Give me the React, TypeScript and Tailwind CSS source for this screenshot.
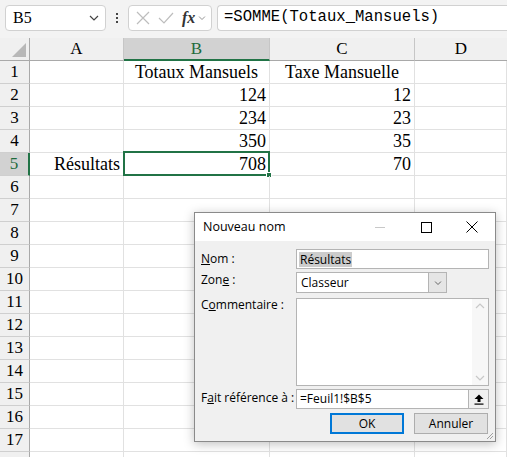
import React from "react";

const serif = { fontFamily: '"Liberation Serif", "Times New Roman", serif' };
const ui = { fontFamily: '"Open Sans", "Noto Sans", sans-serif' };
const mono = { fontFamily: '"Liberation Mono", "DejaVu Sans Mono", monospace' };

type Row = { a?: string; b?: string; c?: string; center?: boolean };

const data: Row[] = [
  { b: "Totaux Mansuels", c: "Taxe Mansuelle", center: true },
  { b: "124", c: "12" },
  { b: "234", c: "23" },
  { b: "350", c: "35" },
  { a: "Résultats", b: "708", c: "70" },
];

function Chevron({ className = "" }: { className?: string }) {
  return (
    <svg width="10" height="6" viewBox="0 0 10 6" className={className}>
      <path d="M1 1 L5 5 L9 1" fill="none" stroke="currentColor" strokeWidth="1.2" />
    </svg>
  );
}

function Toolbar() {
  return (
    <div className="h-[38px] bg-[#f3f3f3] flex items-start pt-[5px] pl-[5px]">
      <div className="w-[101px] h-[26px] bg-white border border-[#d1d1d1] rounded-[4px] flex items-center pl-[7px] pr-[6px]">
        <span className="text-[16px] text-black flex-1 leading-none" style={serif}>B5</span>
        <Chevron className="text-[#444]" />
      </div>
      <div className="w-[22px] h-[26px] flex flex-col items-center justify-center gap-[2px]">
        <span className="w-[2px] h-[2px] bg-[#444]" />
        <span className="w-[2px] h-[2px] bg-[#444]" />
        <span className="w-[2px] h-[2px] bg-[#444]" />
      </div>
      <div className="w-[84px] h-[26px] bg-white border border-[#d1d1d1] rounded-[4px] flex items-center pl-[7px]">
        <svg width="14" height="14" viewBox="0 0 14 14" className="mr-[8px]">
          <path d="M1 1 L13 13 M13 1 L1 13" stroke="#bdbdbd" strokeWidth="1.2" />
        </svg>
        <svg width="16" height="14" viewBox="0 0 16 14" className="mr-[8px]">
          <path d="M1 7 L6 12 L15 2" fill="none" stroke="#bdbdbd" strokeWidth="1.2" />
        </svg>
        <span className="text-[16px] italic font-bold text-[#333] leading-none mr-[2px]" style={serif}>fx</span>
        <Chevron className="text-[#888] scale-75" />
      </div>
      <div className="flex-1 h-[26px] ml-[5px] bg-white border border-[#d1d1d1] border-r-0 rounded-l-[4px] flex items-center pl-[6px]">
        <span className="text-[15.6px] text-black leading-none" style={mono}>=SOMME(Totaux_Mansuels)</span>
      </div>
    </div>
  );
}

function HeaderRow() {
  const cols: { l: string; w: string; sel?: boolean }[] = [
    { l: "A", w: "w-[94px]" },
    { l: "B", w: "w-[146px]", sel: true },
    { l: "C", w: "w-[145px]" },
  ];
  return (
    <div className="flex h-[23px] bg-[#f0f0f0]" style={serif}>
      <div className="w-[30px] h-full border-r border-b border-[#a9a9a9] relative">
        <div className="absolute right-[3px] bottom-[3px] w-0 h-0 border-l-[14px] border-l-transparent border-b-[14px] border-b-[#b8b8b8]" />
      </div>
      {cols.map((c) => (
        <div
          key={c.l}
          className={`${c.w} h-full flex items-center justify-center text-[17px] border-r ${
            c.sel
              ? "bg-[#d2d2d2] text-[#1e6b3c] border-r-[#c6c6c6] border-b-2 border-b-[#217346]"
              : "text-black border-r-[#c6c6c6] border-b border-b-[#a9a9a9]"
          }`}
        >
          {c.l}
        </div>
      ))}
      <div className="flex-1 h-full flex items-center justify-center text-[17px] border-b border-[#a9a9a9] pr-[0px]">
        <span className="w-[92px] text-center">D</span>
      </div>
    </div>
  );
}

function GridRow({ n, r, label = true }: { n: number; r?: Row; label?: boolean }) {
  const sel = n === 5;
  const cell = "h-full border-r border-b border-[#e1e1e1] flex items-center text-[18px] text-black";
  const align = r?.center ? "justify-center" : "justify-end pr-[3px]";
  return (
    <div className="flex h-[23px]" style={serif}>
      <div
        className={`w-[30px] h-full flex items-center justify-center text-[17px] border-b border-[#cfcfcf] ${
          sel ? "bg-[#d2d2d2] text-[#1e6b3c] border-r-2 border-r-[#217346]" : "bg-[#f0f0f0] text-black border-r border-r-[#a9a9a9]"
        }`}
      >
        {label ? n : null}
      </div>
      <div className={`w-[94px] ${cell} justify-end pr-[3px]`}>{r?.a}</div>
      <div className={`w-[146px] ${cell} ${align} relative`}>
        {r?.b}
        {sel && (
          <>
            <div className="absolute -left-[1px] -top-[2px] -right-[1px] -bottom-[1px] border-2 border-[#217346]" />
            <div className="absolute -right-[3px] -bottom-[3px] w-[6px] h-[6px] bg-[#217346] border border-white" />
          </>
        )}
      </div>
      <div className={`w-[145px] ${cell} ${align}`}>{r?.c}</div>
      <div className={`flex-1 ${cell}`} />
    </div>
  );
}

function Dialog() {
  return (
    <div
      className="absolute left-[194px] top-[212px] w-[302px] h-[230px] bg-[#f0f0f0] border border-[#8a8a8a] shadow-[0_2px_10px_rgba(0,0,0,0.25)] flex flex-col text-[12px] text-black"
      style={ui}
    >
      <div className="h-[28px] bg-white flex items-center pl-[8px]">
        <span className="flex-1 text-[12.5px]">Nouveau nom</span>
        <span className="w-[46px] flex justify-center">
          <span className="w-[10px] h-[1px] bg-[#c8c8c8]" />
        </span>
        <span className="w-[46px] flex justify-center">
          <span className="w-[11px] h-[11px] border border-black" />
        </span>
        <span className="w-[46px] flex justify-center">
          <svg width="12" height="12" viewBox="0 0 12 12">
            <path d="M0.5 0.5 L11.5 11.5 M11.5 0.5 L0.5 11.5" stroke="#000" strokeWidth="1" />
          </svg>
        </span>
      </div>
      <div className="flex-1 flex flex-col pl-[6px] pr-[6px] pt-[8px] relative">
        <div className="flex items-center h-[20px]">
          <span className="w-[95px]"><u>N</u>om :</span>
          <div className="flex-1 h-[20px] bg-white border border-[#b4b4b4] flex items-center pl-[2px]">
            <span className="bg-[#cccccc] px-[1px] leading-[15px]">Résultats</span>
          </div>
        </div>
        <div className="flex items-center h-[21px] mt-[3px]">
          <span className="w-[95px] self-start -mt-[1px]">Zon<u>e</u> :</span>
          <div className="w-[151px] h-[21px] bg-white border border-[#b4b4b4] flex items-center pl-[4px]">
            <span className="flex-1">Classeur</span>
            <div className="w-[18px] h-[19px] bg-[#e5e5e5] border-l border-[#b4b4b4] flex items-center justify-center">
              <Chevron className="text-[#555] scale-75" />
            </div>
          </div>
        </div>
        <div className="flex h-[88px] mt-[5px]">
          <span className="w-[95px] -mt-[2px]">C<u>o</u>mmentaire :</span>
          <div className="flex-1 h-full bg-white border border-[#b4b4b4] flex justify-end">
            <div className="w-[16px] h-full bg-[#f7f7f7] flex flex-col items-center justify-between py-[4px]">
              <Chevron className="text-[#c8c8c8] rotate-180" />
              <Chevron className="text-[#c8c8c8]" />
            </div>
          </div>
        </div>
        <div className="flex items-center h-[20px] mt-[3px]">
          <span className="w-[95px] -mt-[2px]">F<u>a</u>it référence à :</span>
          <div className="flex-1 h-[20px] bg-white border border-[#b4b4b4] flex items-center">
            <span className="flex-1 pl-[3px]">=Feuil1!$B$5</span>
            <div className="w-[20px] h-full bg-[#f0f0f0] border-l border-[#b4b4b4] flex items-center justify-center">
              <svg width="10" height="11" viewBox="0 0 10 11">
                <path d="M5 0.5 L9.5 5 L6.5 5 L6.5 8 L3.5 8 L3.5 5 L0.5 5 Z" fill="#000" />
                <rect x="0.5" y="9.5" width="9" height="1.2" fill="#000" />
              </svg>
            </div>
          </div>
        </div>
        <div className="flex justify-end mt-[4px] gap-[10px] pr-[1px]">
          <div className="w-[74px] h-[21px] bg-[#e1e1e1] border-2 border-[#0078d7] flex items-center justify-center">OK</div>
          <div className="w-[74px] h-[21px] bg-[#e1e1e1] border border-[#adadad] flex items-center justify-center">Annuler</div>
        </div>
        <svg width="8" height="8" viewBox="0 0 8 8" className="absolute right-[1px] bottom-[1px]">
          <path d="M7 1 L1 7 M7 4 L4 7" stroke="#a0a0a0" strokeWidth="1" />
        </svg>
      </div>
    </div>
  );
}

export default function App() {
  return (
    <div className="w-[507px] h-[457px] bg-white overflow-hidden relative">
      <Toolbar />
      <HeaderRow />
      {Array.from({ length: 18 }, (_, i) => (
        <GridRow key={i} n={i + 1} r={data[i]} label={i < 17} />
      ))}
      <Dialog />
    </div>
  );
}
